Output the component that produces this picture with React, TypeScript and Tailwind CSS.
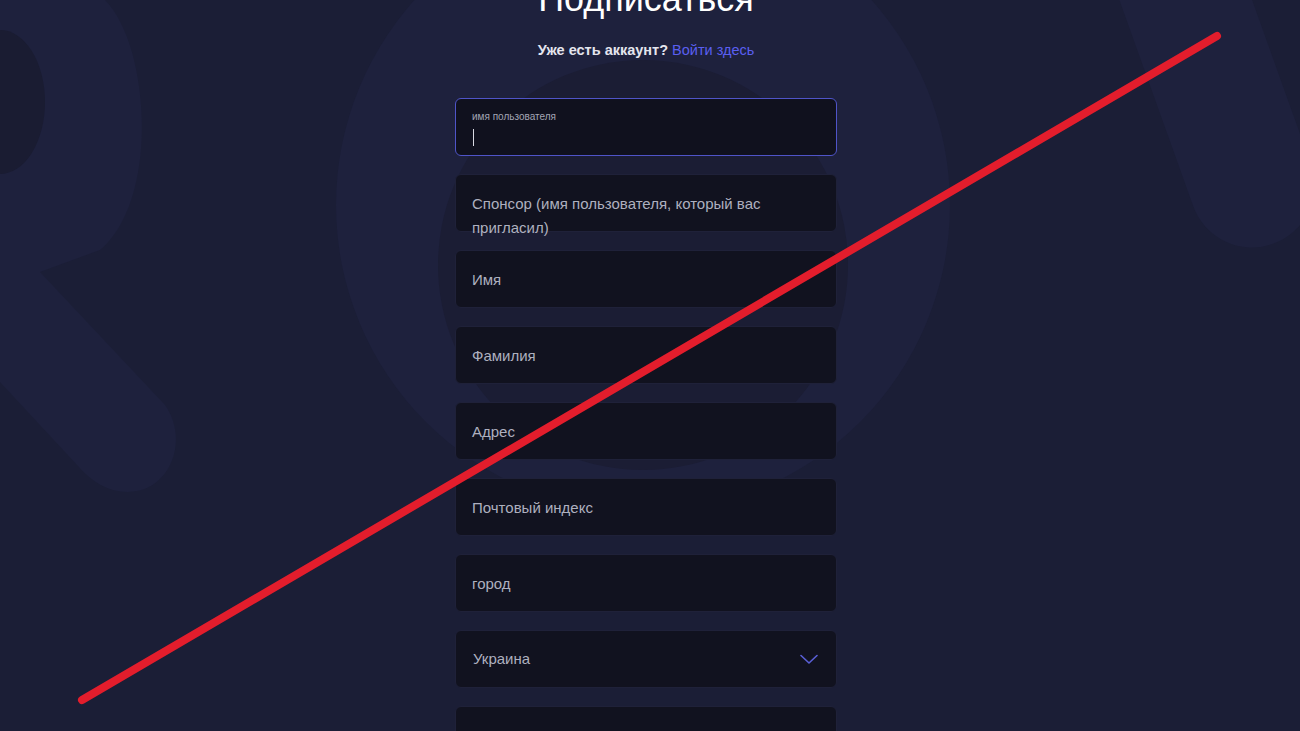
import React from 'react'

// Поля формы регистрации (плейсхолдеры как на странице)
const fields = [
  'Спонсор (имя пользователя, который вас пригласил)',
  'Имя',
  'Фамилия',
  'Адрес',
  'Почтовый индекс',
  'город',
]

function Backdrop() {
  return (
    <svg className="absolute inset-0 h-full w-full" viewBox="0 0 1300 731" preserveAspectRatio="none">
      <rect width="1300" height="731" fill="#1b1e36" />
      {/* big letter on the left */}
      <path
        d="M0 0 H105 C150 45 160 200 100 250 L40 272 L165 405 C190 440 170 492 128 492 C108 492 92 482 78 466 L0 382 Z"
        fill="#1e213d"
      />
      <ellipse cx="0" cy="102" rx="45" ry="72" fill="#1a1c32" />
      {/* ring in the middle */}
      <circle cx="643" cy="205" r="307" fill="#1e213d" />
      <circle cx="643" cy="265" r="205" fill="#1b1d34" />
      {/* band on the right */}
      <line x1="1175" y1="-30" x2="1252" y2="185" stroke="#1e213d" strokeWidth="125" strokeLinecap="round" />
    </svg>
  )
}

function TextField({ label }: { label: string }) {
  return (
    <div className="relative h-[58px] w-full rounded-md border border-[#1f2139] bg-[#11121f]">
      <div className="absolute left-4 right-4 top-[17px] text-[15px] leading-6 text-[#aeb0bf]">{label}</div>
    </div>
  )
}

export default function App() {
  return (
    <div className="relative h-[731px] w-full overflow-hidden bg-[#1b1e36] font-['Liberation_Sans',Arial,sans-serif]">
      <Backdrop />

      <div className="relative flex justify-center pr-2">
        <div className="flex w-[382px] flex-col items-center">
          <h1 className="-mt-[21px] text-[36px] leading-10 text-white">Подписаться</h1>
          <p className="mt-[21px] text-[14.5px] leading-5 text-[#e4e5ee]">
            <span className="font-semibold">Уже есть аккаунт?</span>{' '}
            <a className="text-[#5a5ff0]" href="#">Войти здесь</a>
          </p>

          <div className="mt-[38px] flex w-full flex-col gap-[18px]">
            {/* активное поле */}
            <div className="relative h-[58px] w-full rounded-md border border-[#4f54c8] bg-[#10111e]">
              <div className="absolute left-4 top-[12px] text-[10px] leading-3 text-[#a3a5b4]">имя пользователя</div>
              <div className="absolute left-[17px] top-[30px] h-[17px] w-px bg-[#d8d9e2]" />
            </div>

            {fields.map((f) => (
              <TextField key={f} label={f} />
            ))}

            <div className="flex h-[58px] w-full items-center justify-between rounded-md border border-[#1f2139] bg-[#11121f] pl-[17px] pr-[18px]">
              <span className="text-[15px] text-[#aeb0bf]">Украина</span>
              <svg width="18" height="11" viewBox="0 0 18 11" fill="none">
                <path d="M1 1.5 L9 9 L17 1.5" stroke="#5a5fd6" strokeWidth="1.6" strokeLinecap="round" strokeLinejoin="round" />
              </svg>
            </div>

            <div className="h-[58px] w-full rounded-md border border-[#1f2139] bg-[#11121f]" />
          </div>
        </div>
      </div>

      {/* red strike line over the page */}
      <svg className="pointer-events-none absolute inset-0 h-full w-full" viewBox="0 0 1300 731">
        <line x1="82" y1="700" x2="1217" y2="36" stroke="#e31d2c" strokeWidth="8" strokeLinecap="round" />
      </svg>
    </div>
  )
}
